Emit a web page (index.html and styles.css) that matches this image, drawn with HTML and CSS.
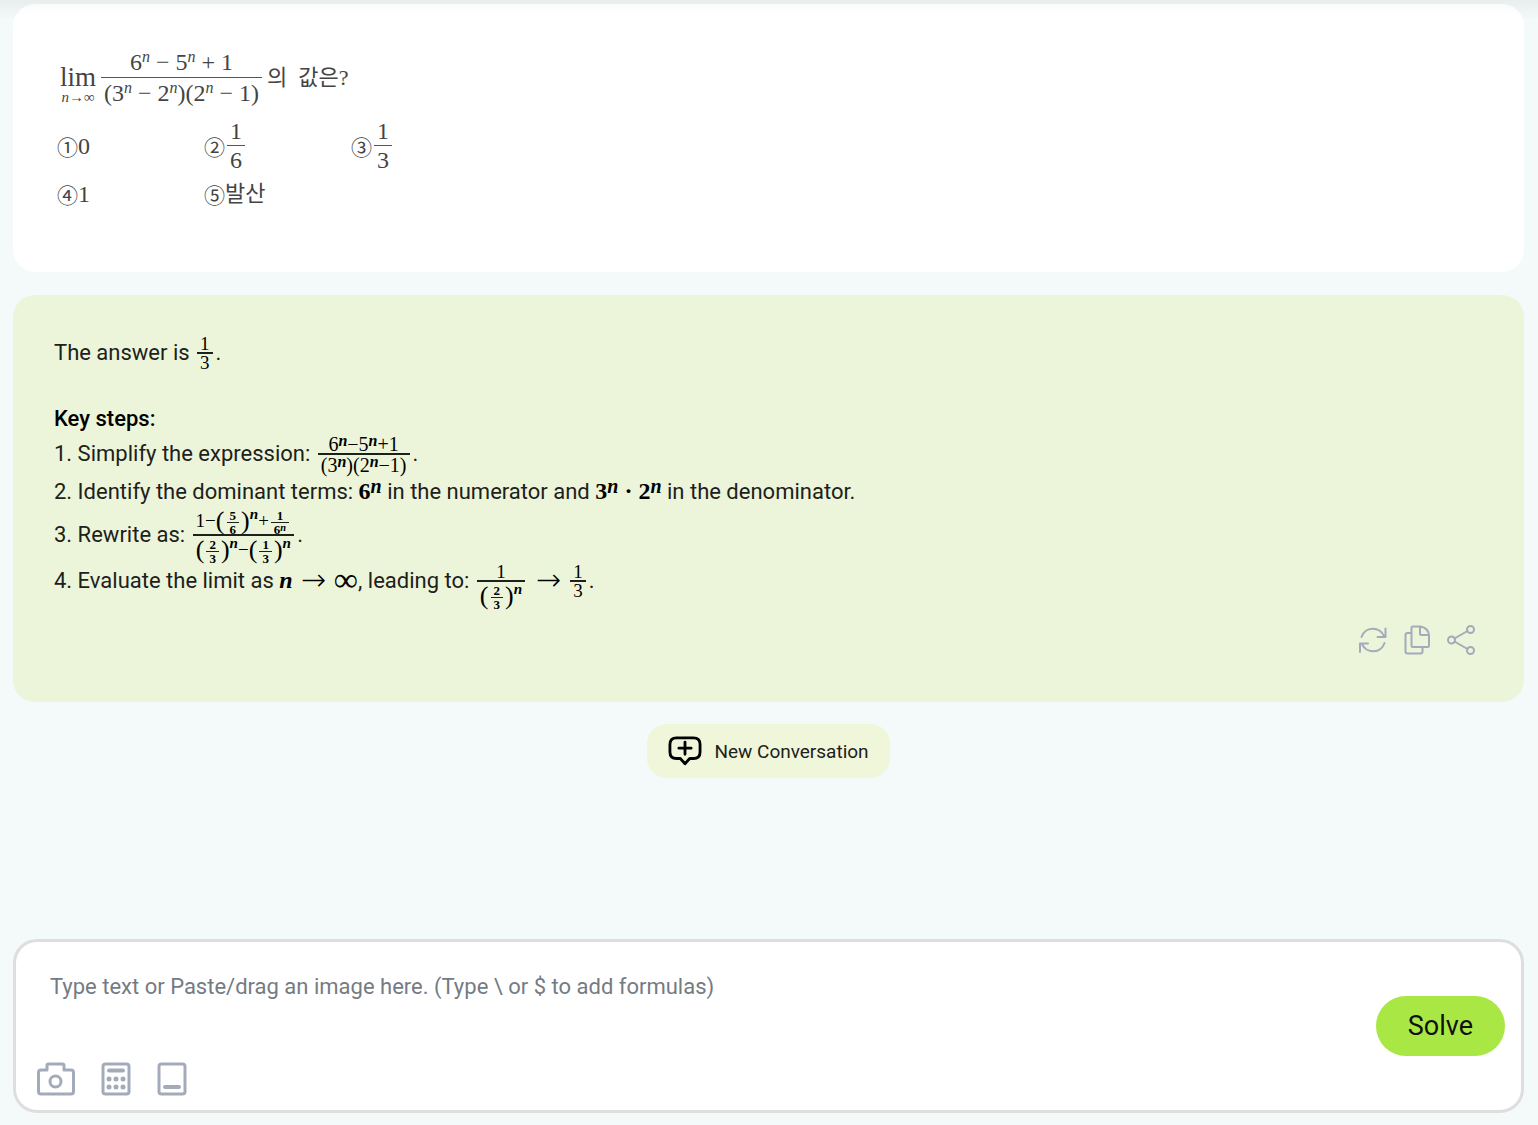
FILE: index.html
```html
<!DOCTYPE html>
<html lang="en">
<head>
  <meta charset="UTF-8" />
  <meta name="viewport" content="width=device-width, initial-scale=1.0"/>
  <title>Math Solver</title>
  <link rel="stylesheet" href="styles.css">
</head>
<body>
  <main class="chat">
    <!-- Question -->
    <section class="card question" lang="ko">
      <div class="equation">
        <span class="limit"><span>lim</span><span class="limit-under"><i>n</i>→∞</span></span>
        <span class="big-frac">
          <span>6<sup>n</sup> − 5<sup>n</sup> + 1</span>
          <span>(3<sup>n</sup> − 2<sup>n</sup>)(2<sup>n</sup> − 1)</span>
        </span>
        <span class="korean">의&nbsp; 값은?</span>
      </div>
      <div class="choices">
        <div class="choice"><span class="num">①</span>0</div>
        <div class="choice"><span class="num">②</span><span class="big-frac"><span>1</span><span>6</span></span></div>
        <div class="choice"><span class="num">③</span><span class="big-frac"><span>1</span><span>3</span></span></div>
        <div class="choice"><span class="num">④</span>1</div>
        <div class="choice"><span class="num">⑤</span><span class="korean">발산</span></div>
      </div>
    </section>

    <!-- Answer -->
    <section class="card answer">
      <p>The answer is <span class="frac"><span>1</span><span>3</span></span>.</p>
      <p class="steps-title">Key steps:</p>
      <div class="step">1. Simplify the expression: <span class="frac frac-wide"><span>6<sup>n</sup>−5<sup>n</sup>+1</span><span>(3<sup>n</sup>)(2<sup>n</sup>−1)</span></span>.</div>
      <div class="step">2. Identify the dominant terms: <span class="math">6<sup>n</sup></span> in the numerator and <span class="math">3<sup>n</sup> · 2<sup>n</sup></span> in the denominator.</div>
      <div class="step">3. Rewrite as: <span class="frac frac-tall"><span>1−<span class="paren">(</span><span class="mini"><span>5</span><span>6</span></span><span class="paren">)</span><sup class="high">n</sup>+<span class="mini"><span>1</span><span>6<sup>n</sup></span></span></span><span><span class="paren">(</span><span class="mini"><span>2</span><span>3</span></span><span class="paren">)</span><sup class="high">n</sup>−<span class="paren">(</span><span class="mini"><span>1</span><span>3</span></span><span class="paren">)</span><sup class="high">n</sup></span></span>.</div>
      <div class="step">4. Evaluate the limit as <span class="math"><i>n</i> <span class="arrow">→</span> <span class="infinity">∞</span></span>, leading to: <span class="frac frac-power"><span>1</span><span><span class="paren">(</span><span class="mini"><span>2</span><span>3</span></span><span class="paren">)</span><sup class="high">n</sup></span></span> <span class="math"><span class="arrow">→</span></span> <span class="frac"><span>1</span><span>3</span></span>.</div>

      <div class="actions">
        <button type="button" aria-label="Regenerate">
          <svg width="30" height="30" viewBox="0 0 30 30"><path d="M3.500 12a12 12 0 0 1 22.500-1M27.500 3.500v8.500h-8M26.500 18a12 12 0 0 1-22.500 1M2 27v-8.500h8"/></svg>
        </button>
        <button type="button" aria-label="Copy">
          <svg width="30" height="30" viewBox="0 0 30 30"><path d="M9.500 3a1.500 1.500 0 0 1 1.500-1.500h7.500q8 1.500 8.500 9v10a1.500 1.500 0 0 1-1.500 1.500h-14.500a1.500 1.500 0 0 1-1.500-1.500zM18 1.500v7a1.500 1.500 0 0 0 1.500 1.500h7M9.500 8h-4a2 2 0 0 0-2 2v16.500a2 2 0 0 0 2 2h13a2 2 0 0 0 2-2v-4"/></svg>
        </button>
        <button type="button" aria-label="Share">
          <svg width="30" height="30" viewBox="0 0 30 30"><path d="M8.500 13.500l13-7.500M8.500 16.500l13 7.500"/><circle cx="5.500" cy="15" r="3.500"/><circle cx="24.500" cy="4.500" r="3.500"/><circle cx="24.500" cy="25.500" r="3.500"/></svg>
        </button>
      </div>
    </section>

    <button type="button" class="new-chat">
      <svg width="34" height="32" viewBox="0 0 36 34"><path d="M9 3h18q7 0 7 7v8q0 7-7 7h-4l-5 5.500-5-5.500h-4q-7 0-7-7v-8q0-7 7-7zM18 7.500v13M11.500 14h13"/></svg>
      New Conversation
    </button>
  </main>

  <!-- Input box -->
  <form class="composer">
    <div class="composer-main">
      <textarea aria-label="Your question" placeholder="Type text or Paste/drag an image here. (Type \ or $ to add formulas)"></textarea>
      <div class="tools">
        <button type="button" aria-label="Upload a photo">
          <svg width="38" height="34" viewBox="0 0 38 34"><path d="M10 8V3.500Q10 2 11.500 2h14Q27 2 27 3.500V8h7q2.500 0 2.500 2.500v19q0 2.500-2.500 2.500H4q-2.500 0-2.500-2.500v-19Q1.500 8 4 8z"/><circle cx="18.500" cy="19.500" r="5.500"/></svg>
        </button>
        <button type="button" aria-label="Calculator">
          <svg width="30" height="34" viewBox="0 0 30 34"><rect x="2" y="2" width="26" height="30" rx="2.500"/><path class="thick" d="M8 8.500h14"/><g class="dots"><circle cx="8" cy="17" r="2.500"/><circle cx="15" cy="17" r="2.500"/><circle cx="22" cy="17" r="2.500"/><circle cx="8" cy="25" r="2.500"/><circle cx="15" cy="25" r="2.500"/><circle cx="22" cy="25" r="2.500"/></g></svg>
        </button>
        <button type="button" aria-label="Keyboard">
          <svg width="30" height="34" viewBox="0 0 30 34"><rect x="2" y="2" width="26" height="30" rx="2.500"/><path class="thick" d="M8 25h14"/></svg>
        </button>
      </div>
    </div>
    <button type="submit" class="solve">Solve</button>
  </form>
</body>
</html>
```
FILE: styles.css
```css
* {
  box-sizing: border-box;
}

body {
  font-family: Roboto, sans-serif;
  font-size: 22px;
  line-height: 33px;
  color: #1c211b;
  background: linear-gradient(#e8eeee, #f4f9fa 20px);
  display: flex;
  flex-direction: column;
  min-height: 100vh;
  margin: 0;
  padding: 4px 14px 12px 13px;
}

button {
  font-family: inherit;
  color: inherit;
  border: none;
  cursor: pointer;
}

svg {
  display: block;
  fill: none;
  stroke: #a3abbb;
  stroke-width: 2;
  stroke-linecap: round;
  stroke-linejoin: round;
}

p {
  margin: 0 0 30px;
}

.chat {
  flex: 1;
  display: flex;
  flex-direction: column;
}

.card {
  border-radius: 22px;
}

/* Question */
.question {
  background: linear-gradient(#fafbfb, #ffffff 12px);
  padding: 42px 44px 56px;
  margin-bottom: 23px;
  font-family: "Liberation Serif", "Noto Sans CJK KR", serif;
  font-size: 24px;
  line-height: 30px;
  color: #444;
}

.equation {
  display: flex;
  align-items: center;
  gap: 5px;
  height: 64px;
  margin-bottom: 10px;
  padding-left: 3px;
}

.limit {
  display: flex;
  flex-direction: column;
  align-items: center;
  padding-top: 14px;
  font-size: 27px;
  line-height: 24px;
}

.limit-under {
  font-size: 15px;
  line-height: 17px;
}

.big-frac {
  display: inline-grid;
  grid-template-rows: 1fr 1fr;
  text-align: center;
}

.big-frac > span {
  padding: 0 3px;
}

.big-frac > span:first-child {
  border-bottom: 1px solid #555;
}

.korean {
  font-family: "Liberation Serif", "Noto Sans CJK KR", serif;
  font-size: 22px;
}

sup {
  font-size: 80%;
  font-style: italic;
  line-height: 0;
  vertical-align: 5px;
}

.big-frac sup {
  font-size: 16px;
  vertical-align: 8px;
}

.choices {
  display: grid;
  grid-template-columns: repeat(3, 147px);
  grid-template-rows: 52px 44px;
}

.choice {
  display: flex;
  align-items: center;
}

.choice .big-frac {
  margin-left: 2px;
  line-height: 28px;
}

.num {
  font-family: "Noto Sans CJK KR", sans-serif;
  font-size: 21px;
}

/* Answer */
.answer {
  background: #ecf5da;
  padding: 41px 41px 47px;
  margin-bottom: 22px;
}

.steps-title {
  margin: 0;
  font-weight: 500;
  color: #000;
}

.math,
.frac {
  font-family: "Liberation Serif", serif;
  color: #000;
}

.math {
  font-size: 24px;
  font-weight: bold;
  line-height: 0;
}

.math sup {
  font-size: 20px;
  vertical-align: 6px;
}

.arrow {
  font-family: "DejaVu Sans", sans-serif;
  font-size: 30px;
  font-weight: 200;
  margin: 0 2px;
  vertical-align: -2px;
}

.infinity {
  font-size: 34px;
  font-weight: normal;
  vertical-align: -3px;
}

.frac {
  display: inline-grid;
  grid-template-rows: 18px 18px;
  vertical-align: middle;
  margin: 0 3px 0 2px;
  font-size: 19px;
  line-height: 18px;
  text-align: center;
}

.frac > span {
  padding: 0 3px;
  white-space: nowrap;
}

.frac > span:first-child {
  border-bottom: 2px solid #1c211b;
  line-height: 15px;
}

.frac sup {
  font-weight: bold;
}

.frac-wide {
  grid-template-rows: 20px 20px;
  font-size: 20px;
}

.frac-wide > span:first-child {
  line-height: 18px;
}

.frac-wide > span:last-child {
  line-height: 20px;
}

.frac-tall {
  grid-template-rows: 28px 28px;
}

.frac-tall > span:first-child {
  line-height: 25px;
}

.frac-tall > span:last-child,
.frac-power > span:last-child {
  line-height: 28px;
}

.mini {
  display: inline-grid;
  grid-template-rows: 12px 12px;
  vertical-align: middle;
  padding: 0 2px;
  font-size: 13px;
  font-weight: bold;
  text-align: center;
}

.mini > span {
  padding: 0 3px;
  line-height: 13px;
}

.mini > span:first-child {
  border-bottom: 1px solid #1c211b;
  line-height: 10px;
}

.mini sup {
  vertical-align: 3px;
}

.paren {
  font-size: 26px;
  line-height: 0;
  vertical-align: -2px;
}

.high {
  vertical-align: 8px;
}

.actions {
  display: flex;
  justify-content: flex-end;
  gap: 14px;
  margin-top: 25px;
  padding-right: 7px;
}

.actions button,
.tools button {
  background: none;
  padding: 0;
}

.new-chat {
  display: flex;
  align-items: center;
  align-self: center;
  gap: 12px;
  height: 54px;
  padding: 0 21px;
  border-radius: 20px;
  background: #f0f6da;
  font-size: 19px;
}

.new-chat svg {
  stroke: #000;
  stroke-width: 3;
}

/* Input box */
.composer {
  display: flex;
  align-items: flex-start;
  background: #fff;
  border: 3px solid #dedede;
  border-radius: 24px;
  padding: 28px 16px 14px 21px;
}

.composer-main {
  flex: 1;
}

textarea {
  display: block;
  width: 100%;
  height: 92px;
  padding: 0 13px;
  border: none;
  outline: none;
  resize: none;
  background: none;
  font: inherit;
}

textarea::placeholder {
  color: #757b83;
}

.tools {
  display: flex;
  gap: 26px;
}

.tools svg {
  stroke-width: 3;
}

.tools .thick {
  stroke-width: 4;
}

.tools .dots {
  fill: #a3abbb;
  stroke: none;
}

.solve {
  height: 60px;
  margin-top: 26px;
  padding: 0 32px;
  border-radius: 30px;
  background: #a9e744;
  color: #111;
  font-size: 27px;
}
```
